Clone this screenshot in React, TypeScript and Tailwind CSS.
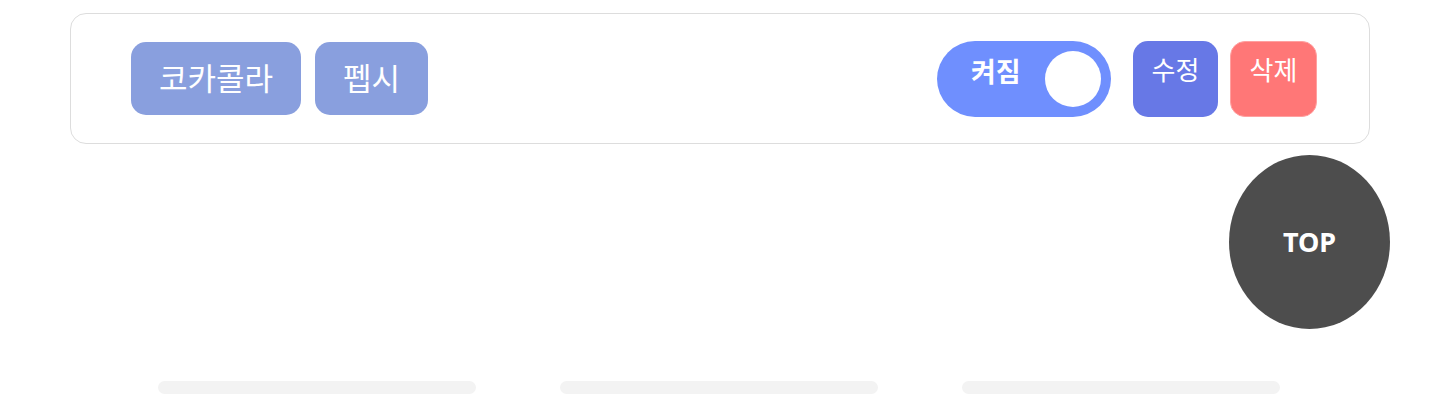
import { useState } from "react";

const brands = ["코카콜라", "펩시"];

export default function App() {
  const [on, setOn] = useState(true);

  return (
    <main
      className="relative min-h-[413px] bg-white pt-[13px]"
      style={{ fontFamily: '"Noto Sans", "Noto Sans CJK KR", sans-serif' }}
    >
      <section className="mx-[70px] flex h-[131px] items-center justify-between rounded-[16px] border border-[#dddddd] pl-[60px] pr-[52px]">
        <div className="flex items-center gap-[14px]">
          {brands.map((name) => (
            <button
              key={name}
              className="flex h-[73px] items-center rounded-[15px] bg-[#899fde] px-[28px] text-[31px] text-white"
            >
              {name}
            </button>
          ))}
        </div>

        <div className="flex items-center">
          <button
            onClick={() => setOn((v) => !v)}
            className="flex h-[76px] w-[174px] items-center justify-between rounded-full bg-[#6f8ffe] pl-[34px] pr-[10px]"
          >
            <span className="-mt-[14px] text-[27px] font-bold leading-none text-white">
              {on ? "켜짐" : "꺼짐"}
            </span>
            <span className="size-[56px] rounded-full bg-white" />
          </button>

          <button className="ml-[22px] flex h-[76px] w-[85px] items-start justify-center rounded-[15px] bg-[#6778e6] pt-[10px] text-[26px] text-white">
            수정
          </button>
          <button className="ml-[12px] flex h-[76px] w-[87px] items-start justify-center rounded-[15px] border border-[#ffa0a0] bg-[#ff7777] pt-[9px] text-[26px] text-white">
            삭제
          </button>
        </div>
      </section>

      <div className="mt-[237px] flex gap-[84px] pl-[158px]">
        {[0, 1, 2].map((i) => (
          <div key={i} className="h-[13px] w-[318px] rounded-full bg-[#f3f3f3]" />
        ))}
      </div>

      <button className="absolute left-[1229px] top-[155px] flex h-[174px] w-[161px] items-center justify-center rounded-[50%] bg-[#4d4d4d] text-[27px] font-bold text-white">
        TOP
      </button>
    </main>
  );
}
